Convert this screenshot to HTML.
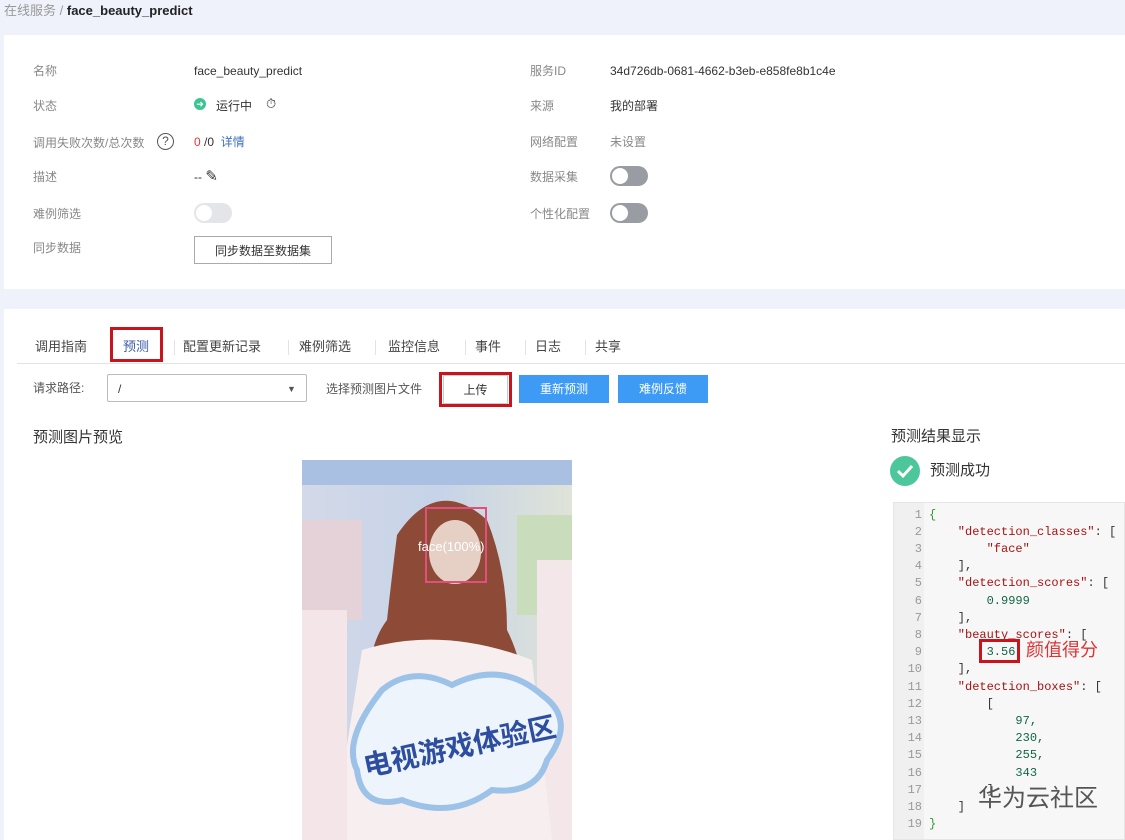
<!DOCTYPE html>
<html><head><meta charset="utf-8"><style>
*{margin:0;padding:0;box-sizing:border-box}
body{width:1125px;height:840px;overflow:hidden;background:#eff2fb;font-family:"Liberation Sans","Noto Sans CJK SC",sans-serif;font-size:12px;color:#333;position:relative}
.a{position:absolute;white-space:nowrap;line-height:14px}
.lbl{color:#888}
.card{position:absolute;background:#fff;left:4px;right:0}
.tog{position:absolute;width:38px;height:20px;border-radius:10px;background:#9a9ca3}
.tog::after{content:"";position:absolute;left:2px;top:2px;width:16px;height:16px;border-radius:50%;background:#fff}
.tog.off{background:#e4e5e8}
.btn{position:absolute;height:28px;line-height:28px;text-align:center;font-size:12px}
.code{position:absolute;left:893px;top:502px;width:232px;height:338px;background:#f7f7f7;border:1px solid #e6e6e6;font-family:"Liberation Mono",monospace;font-size:12px}
.ln{position:absolute;left:0;width:28px;text-align:right;color:#999}
.cl{position:absolute;left:35px;color:#333;white-space:pre}
.s{color:#a11}.n{color:#164}
.tab{position:absolute;top:340px;font-size:13px;color:#444;line-height:14px}
.sep{position:absolute;top:340px;width:1px;height:15px;background:#e3e3e3}
</style></head><body>
<div class="a" style="left:4px;top:4px;color:#999;font-size:13px">在线服务 <span style="color:#999">/</span> <b style="color:#222">face_beauty_predict</b></div>
<div class="card" style="top:35px;height:254px"></div>
<div class="a lbl" style="left:33px;top:64px">名称</div>
<div class="a" style="left:194px;top:64px">face_beauty_predict</div>
<div class="a lbl" style="left:33px;top:99px">状态</div>
<div class="a" style="left:194px;top:98px;width:12px;height:12px;border-radius:50%;background:#3bc590;color:#fff;font-size:9px;line-height:12px;text-align:center">➜</div>
<div class="a" style="left:216px;top:99px">运行中</div>
<div class="a" style="left:266px;top:97px;font-size:13px">⏱</div>
<div class="a lbl" style="left:33px;top:136px">调用失败次数/总次数</div>
<div class="a" style="left:157px;top:133px;width:17px;height:17px;border:1.5px solid #555;border-radius:50%;text-align:center;line-height:14px;font-size:12px;color:#555">?</div>
<div class="a" style="left:194px;top:135px"><span style="color:#e33">0</span> /0 &nbsp;<span style="color:#3c6fc0">详情</span></div>
<div class="a lbl" style="left:33px;top:170px">描述</div>
<div class="a" style="left:194px;top:170px">-- <span style="font-size:15px">✎</span></div>
<div class="a lbl" style="left:33px;top:207px">难例筛选</div>
<div class="tog off" style="left:194px;top:203px"></div>
<div class="a lbl" style="left:33px;top:241px">同步数据</div>
<div class="btn" style="left:194px;top:236px;width:138px;border:1px solid #aaa">同步数据至数据集</div>
<div class="a lbl" style="left:530px;top:64px">服务ID</div>
<div class="a" style="left:610px;top:64px">34d726db-0681-4662-b3eb-e858fe8b1c4e</div>
<div class="a lbl" style="left:530px;top:99px">来源</div>
<div class="a" style="left:610px;top:99px">我的部署</div>
<div class="a lbl" style="left:530px;top:135px">网络配置</div>
<div class="a lbl" style="left:610px;top:135px">未设置</div>
<div class="a lbl" style="left:530px;top:170px">数据采集</div>
<div class="tog" style="left:610px;top:166px"></div>
<div class="a lbl" style="left:530px;top:207px">个性化配置</div>
<div class="tog" style="left:610px;top:203px"></div>

<div class="card" style="top:309px;height:531px"></div>
<div class="a" style="left:17px;top:363px;width:1108px;height:1px;background:#e3e3e3"></div>
<div class="tab" style="left:35px">调用指南</div>
<div class="a" style="left:110px;top:327px;width:53px;height:35px;border:3px solid #c8141c"></div>
<div class="tab" style="left:123px;color:#3c5aa8">预测</div>
<div class="sep" style="left:174px"></div>
<div class="tab" style="left:183px">配置更新记录</div>
<div class="sep" style="left:288px"></div>
<div class="tab" style="left:299px">难例筛选</div>
<div class="sep" style="left:375px"></div>
<div class="tab" style="left:388px">监控信息</div>
<div class="sep" style="left:465px"></div>
<div class="tab" style="left:475px">事件</div>
<div class="sep" style="left:525px"></div>
<div class="tab" style="left:535px">日志</div>
<div class="sep" style="left:585px"></div>
<div class="tab" style="left:595px">共享</div>
<div class="a" style="left:33px;top:381px;color:#555">请求路径:</div>
<div class="a" style="left:107px;top:374px;width:200px;height:28px;border:1px solid #bbb;border-radius:2px"></div>
<div class="a" style="left:118px;top:382px">/</div>
<div class="a" style="left:287px;top:382px;font-size:9px;color:#555">▼</div>
<div class="a" style="left:326px;top:382px;color:#555">选择预测图片文件</div>
<div class="a" style="left:439px;top:372px;width:73px;height:35px;border:3px solid #c8141c"></div>
<div class="btn" style="left:443px;top:375px;width:65px;height:29px;border:1px solid #ccc;background:#fff">上传</div>
<div class="btn" style="left:519px;top:375px;width:90px;background:#3d9bf5;color:#fff">重新预测</div>
<div class="btn" style="left:618px;top:375px;width:90px;background:#3d9bf5;color:#fff">难例反馈</div>
<div class="a" style="left:33px;top:430px;font-size:15px;line-height:16px;color:#333">预测图片预览</div>
<div class="a" style="left:891px;top:429px;font-size:15px;line-height:16px;color:#333">预测结果显示</div>
<div class="a" style="left:890px;top:456px;width:30px;height:30px;border-radius:50%;background:#4bc79b"><svg width="30" height="30"><path d="M8 15l5 5 9-10" stroke="#fff" stroke-width="3" fill="none"/></svg></div>
<div class="a" style="left:930px;top:463px;font-size:15px;line-height:16px">预测成功</div>

<svg class="a" style="left:302px;top:460px" width="270" height="380">
<defs><linearGradient id="bg" x1="0" y1="0" x2="1" y2="0"><stop offset="0" stop-color="#d3d9e8"/><stop offset=".5" stop-color="#c6d3e8"/><stop offset="1" stop-color="#dfe3d8"/></linearGradient></defs>
<rect width="270" height="380" fill="url(#bg)"/>
<rect x="0" y="0" width="270" height="25" fill="#a9c0e2"/>
<rect x="0" y="60" width="60" height="100" fill="#e4d2d8"/>
<rect x="215" y="55" width="55" height="100" fill="#c9dcbc"/>
<rect x="235" y="100" width="35" height="280" fill="#f3e7e9"/>
<path d="M95 75 Q135 15 185 60 Q205 110 205 170 Q235 230 205 280 L75 280 Q55 200 85 160 Q90 115 95 75Z" fill="#8d4a36"/>
<ellipse cx="153" cy="92" rx="26" ry="32" fill="#e6d0c6"/>
<path d="M60 190 Q140 165 230 200 L250 380 L30 380Z" fill="#f7eef0"/>
<rect x="0" y="150" width="45" height="230" fill="#f4e6e8"/>
<path d="M80 230 Q110 205 150 225 Q200 200 240 235 Q275 260 245 300 Q235 335 190 330 Q150 360 100 340 Q60 350 55 310 Q40 280 80 230Z" fill="#eef4fb" stroke="#9cc2e8" stroke-width="6"/>
<text x="60" y="300" font-family="Noto Sans CJK SC" font-size="28" font-weight="bold" fill="#2d4ea0" transform="rotate(-12 140 290)">电视游戏体验区</text>
<rect x="124" y="48" width="60" height="74" fill="none" stroke="#e0507a" stroke-width="2"/>
<text x="116" y="91" font-family="Liberation Sans" font-size="13" fill="#fff">face(100%)</text>
</svg>

<div class="code">
<div style="position:absolute;left:0;top:0;width:30px;height:100%;background:#f0f0f0"></div>
<div class="ln" style="top:5px">1</div><div class="cl" style="top:5px;color:#393">{</div>
<div class="ln" style="top:22px">2</div><div class="cl s" style="top:22px">    "detection_classes"<span style="color:#333">: [</span></div>
<div class="ln" style="top:39px">3</div><div class="cl s" style="top:39px">        "face"</div>
<div class="ln" style="top:56px">4</div><div class="cl" style="top:56px">    ],</div>
<div class="ln" style="top:73px">5</div><div class="cl s" style="top:73px">    "detection_scores"<span style="color:#333">: [</span></div>
<div class="ln" style="top:91px">6</div><div class="cl n" style="top:91px">        0.9999</div>
<div class="ln" style="top:108px">7</div><div class="cl" style="top:108px">    ],</div>
<div class="ln" style="top:125px">8</div><div class="cl s" style="top:125px">    "beauty_scores"<span style="color:#333">: [</span></div>
<div class="ln" style="top:142px">9</div><div class="cl n" style="top:142px">        3.56</div>
<div class="ln" style="top:159px">10</div><div class="cl" style="top:159px">    ],</div>
<div class="ln" style="top:177px">11</div><div class="cl s" style="top:177px">    "detection_boxes"<span style="color:#333">: [</span></div>
<div class="ln" style="top:194px">12</div><div class="cl" style="top:194px">        [</div>
<div class="ln" style="top:211px">13</div><div class="cl n" style="top:211px">            97,</div>
<div class="ln" style="top:228px">14</div><div class="cl n" style="top:228px">            230,</div>
<div class="ln" style="top:245px">15</div><div class="cl n" style="top:245px">            255,</div>
<div class="ln" style="top:263px">16</div><div class="cl n" style="top:263px">            343</div>
<div class="ln" style="top:280px">17</div><div class="cl" style="top:280px">        ]</div>
<div class="ln" style="top:297px">18</div><div class="cl" style="top:297px">    ]</div>
<div class="ln" style="top:314px">19</div><div class="cl" style="top:314px;color:#393">}</div>
</div>
<div class="a" style="left:979px;top:639px;width:41px;height:24px;border:3px solid #c8141c"></div>
<div class="a" style="left:1026px;top:640px;font-size:18px;line-height:20px;color:#d33">颜值得分</div>
<div class="a" style="left:978px;top:786px;font-size:24px;line-height:26px;color:#555">华为云社区</div>
</body></html>
